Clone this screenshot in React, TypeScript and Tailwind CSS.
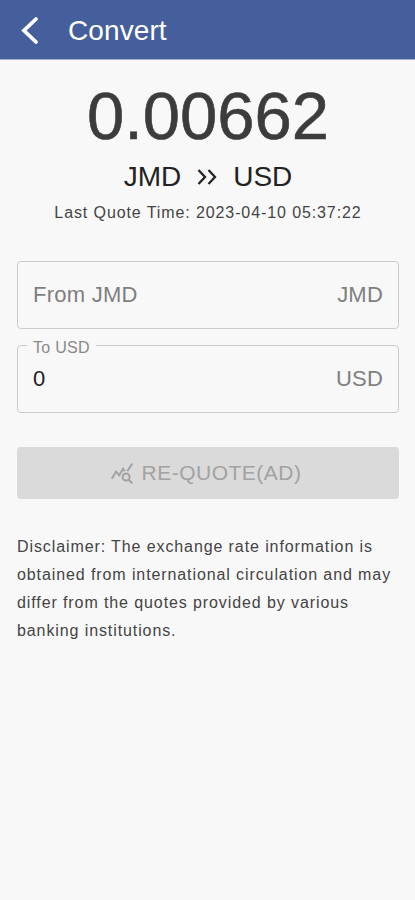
import { MdQueryStats } from "react-icons/md";

type AmountFieldProps = {
  label: string;
  currency: string;
  value?: string;
};

function AmountField({ label, currency, value }: AmountFieldProps) {
  return (
    <div className="relative flex h-[68px] items-center justify-between rounded-[4px] border border-[#cbcbcb] px-[15px] text-[22px] leading-7 text-[#7f7f7f]">
      {value !== undefined ? (
        <>
          <span className="absolute -top-2 left-[9px] bg-[#f8f8f8] px-1.5 text-base leading-5 tracking-[0.3px] text-[#8a8a8a]">
            {label}
          </span>
          <span className="text-[#222]">{value}</span>
        </>
      ) : (
        <span className="tracking-[0.25px]">{label}</span>
      )}
      <span className="tracking-[0.2px]">{currency}</span>
    </div>
  );
}

export default function App() {
  return (
    <div className="min-h-screen bg-[#f8f8f8] font-['Liberation_Sans',Arial,sans-serif] text-[#222]">
      <header className="flex h-[60px] items-center border-b border-[#a3b0d0] bg-[#455f9c] pl-[15px] text-white">
        <svg
          className="h-[30px] w-[30px]"
          viewBox="0 0 30 30"
          fill="none"
          stroke="currentColor"
          strokeWidth="3.8"
          strokeLinecap="round"
        >
          <path d="M21 4L9 15.5l12 11.5" />
        </svg>
        <h1 className="ml-[23px] pt-0.5 text-[28px] tracking-[0.1px]">Convert</h1>
      </header>

      <main className="pr-4 pl-[17px]">
        <section className="flex flex-col items-center pt-5">
          <div className="text-[67px] leading-[72px] text-[#3c3c3c] [-webkit-text-stroke:0.6px_#3c3c3c]">
            0.00662
          </div>
          <div className="mt-[9px] flex items-center text-[28px] leading-8">
            <span>JMD</span>
            <svg
              className="mx-[14px] h-6 w-6"
              viewBox="0 0 24 24"
              fill="none"
              stroke="currentColor"
              strokeWidth="2.3"
            >
              <path d="M3.5 5l6.5 7-6.5 7M13.5 5l6.5 7-6.5 7" />
            </svg>
            <span>USD</span>
          </div>
          <div className="mt-2.5 text-base leading-5 tracking-[0.9px] text-[#444]">
            Last Quote Time: 2023-04-10 05:37:22
          </div>
        </section>

        <section className="mt-[38px] flex flex-col gap-4">
          <AmountField label="From JMD" currency="JMD" />
          <AmountField label="To USD" currency="USD" value="0" />
        </section>

        <button
          disabled
          className="mt-[34px] flex h-[52px] w-full items-center justify-center gap-2 rounded-[4px] bg-[#dadada] pr-[5px] text-[21px] tracking-[0.5px] text-[#a2a2a2]"
        >
          <MdQueryStats className="h-6 w-6" />
          RE-QUOTE(AD)
        </button>

        <p className="mt-[34px] text-base leading-[28px] tracking-[0.9px] whitespace-nowrap text-[#444]">
          Disclaimer: The exchange rate information is
          <br />
          obtained from international circulation and may
          <br />
          differ from the quotes provided by various
          <br />
          banking institutions.
        </p>
      </main>
    </div>
  );
}
